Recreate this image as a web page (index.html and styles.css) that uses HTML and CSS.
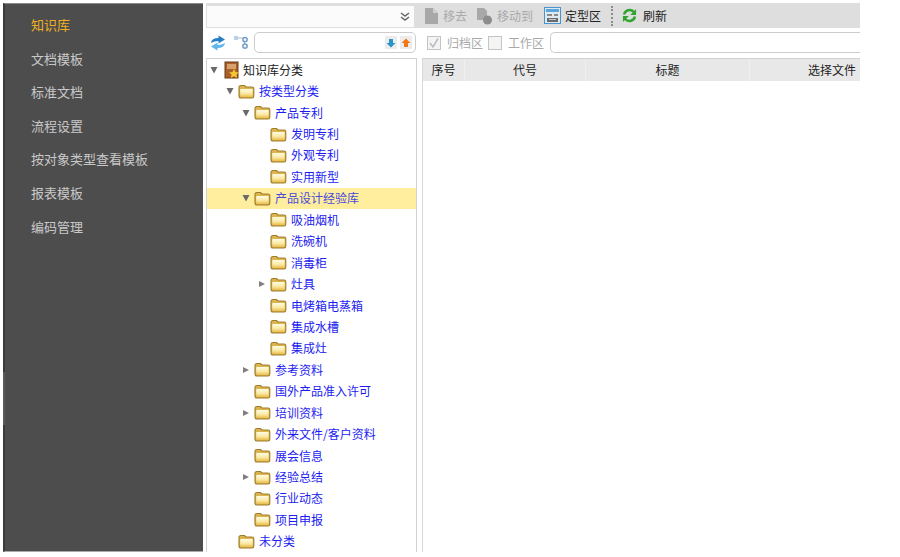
FILE: index.html
```html
<!DOCTYPE html>
<html lang="zh-CN">
<head>
<meta charset="utf-8">
<title>知识库</title>
<link rel="stylesheet" href="styles.css">
</head>
<body>
<svg class="defs" width="0" height="0" aria-hidden="true">
  <defs>
    <linearGradient id="fg" x1="0" y1="0" x2="0" y2="1">
      <stop offset="0" stop-color="#fffbe2"/>
      <stop offset="0.55" stop-color="#fbe9a6"/>
      <stop offset="1" stop-color="#e9bd4c"/>
    </linearGradient>
    <symbol id="folder" viewBox="0 0 17 15">
      <path d="M1 3.5 Q1 1.5 3 1.5 H6.5 L8 3 H14 Q15.8 3 15.8 4.8 V12 Q15.8 14 14 14 H3 Q1 14 1 12 Z" fill="#dcb450" stroke="#a07c28" stroke-width="1.1"/>
      <path d="M2.2 5.8 Q2.2 5 3 5 H14 Q14.7 5 14.7 5.8 V12 Q14.7 13 13.8 13 H3.2 Q2.2 13 2.2 12 Z" fill="url(#fg)"/>
    </symbol>
    <symbol id="down" viewBox="0 0 8 8"><path d="M0.5 1 H7.5 L4 7.5 Z" fill="#6a6a6a"/></symbol>
    <symbol id="right" viewBox="0 0 8 8"><path d="M1 1 L7 4 L1 7 Z" fill="#808080"/></symbol>
  </defs>
</svg>
<div class="app">
  <nav class="side">
    <a class="side-item active">知识库</a>
    <a class="side-item">文档模板</a>
    <a class="side-item">标准文档</a>
    <a class="side-item">流程设置</a>
    <a class="side-item">按对象类型查看模板</a>
    <a class="side-item">报表模板</a>
    <a class="side-item">编码管理</a>
  </nav>
  <div class="main">
    <div class="bar-top">
      <div class="select">
        <svg class="chev" viewBox="0 0 10 10" width="10" height="10"><path d="M1 1 L5 4 L9 1 M1 5 L5 8 L9 5" fill="none" stroke="#666" stroke-width="1.5"/></svg>
      </div>
      <div class="toolbar">
        <svg class="ti ti-1" viewBox="0 0 15 18" width="15" height="18"><path d="M1 1 H9 L14 6 V17 H1 Z" fill="#a8a8a8"/><path d="M9 1 V6 H14" fill="#d0d0d0"/></svg>
        <span class="tt off t-1">移去</span>
        <svg class="ti ti-2" viewBox="0 0 16 18" width="16" height="18"><path d="M1 1 H8 L11 4 V13 H1 Z" fill="#a8a8a8"/><circle cx="11.5" cy="13" r="4.5" fill="#8c8c8c"/></svg>
        <span class="tt off t-2">移动到</span>
        <svg class="ti ti-3" viewBox="0 0 17 17" width="17" height="17"><rect x="0.5" y="0.5" width="16" height="16" fill="#dfe9f0" stroke="#4a94cc"/><rect x="2" y="2" width="13" height="3" fill="#5aa6dc"/><rect x="3" y="7" width="5" height="2" fill="#8a8a8a"/><rect x="10" y="7" width="4" height="2" fill="#8a8a8a"/><rect x="3" y="11" width="11" height="4" fill="#6a6a6a"/><rect x="5" y="12" width="7" height="1" fill="#ccc"/></svg>
        <span class="tt t-3">定型区</span>
        <span class="dots"></span>
        <svg class="ti ti-4" viewBox="0 0 16 16" width="15" height="15"><path d="M2.2 7 A6 6 0 0 1 12.6 4.2" fill="none" stroke="#2fa52f" stroke-width="2.6"/><path d="M15 1 V7.5 H8.8 Z" fill="#2fa52f"/><path d="M13.8 9 A6 6 0 0 1 3.4 11.8" fill="none" stroke="#2fa52f" stroke-width="2.6"/><path d="M1 15 V8.5 H7.2 Z" fill="#2fa52f"/></svg>
        <span class="tt">刷新</span>
      </div>
    </div>
    <div class="bar-second">
      <div class="tree-tools">
        <svg class="sync" viewBox="0 0 16 16" width="16" height="16"><path d="M1 8 Q1.5 3 8.5 3 V0.5 L15 4.5 L8.5 8.5 V6 Q4 6 1 8 Z" fill="#2a7fc4"/><path d="M15 8 Q14.5 13 7.5 13 V15.5 L1 11.5 L7.5 7.5 V10 Q12 10 15 8 Z" fill="#62b6ee"/></svg>
        <svg class="nodes" viewBox="0 0 16 15" width="16" height="15"><path d="M5 3 H11.5 M11.5 3 V10" fill="none" stroke="#a8b8c8"/><rect x="1" y="1" width="4" height="4" fill="#b8d0ea"/><circle cx="12" cy="4.5" r="2.2" fill="#eef4fa" stroke="#6a94c4" stroke-width="1.3"/><circle cx="12" cy="11" r="2.2" fill="#eef4fa" stroke="#6a94c4" stroke-width="1.3"/></svg>
        <div class="search">
          <span class="step"><svg viewBox="0 0 10 10" width="10" height="10"><path d="M3 1 H7 V5 H9.5 L5 9.5 L0.5 5 H3 Z" fill="#2a93c9"/></svg></span>
          <span class="step"><svg viewBox="0 0 10 10" width="10" height="10"><path d="M3 9 H7 V5 H9.5 L5 0.5 L0.5 5 H3 Z" fill="#f07818"/></svg></span>
        </div>
      </div>
      <div class="filters">
        <span class="check"><svg viewBox="0 0 14 14" width="14" height="14"><path d="M3 7 L6 11 L11 2.5" fill="none" stroke="#bbb" stroke-width="1.5"/></svg></span>
        <span class="fl">归档区</span>
        <span class="check"></span>
        <span class="fl">工作区</span>
        <div class="filter-input"></div>
      </div>
    </div>
    <div class="panes">
      <div class="tree">
        <div class="row l0"><svg class="ar"><use href="#down"/></svg><svg class="book" viewBox="0 0 17 18" width="17" height="18"><rect x="2" y="1" width="13" height="16" fill="#a8602c" stroke="#6c3a14"/><rect x="4" y="3" width="9" height="5" fill="#d8a06a"/><path d="M11 8 L12.5 11 L16 11.4 L13.4 13.6 L14.2 17 L11 15.2 L7.8 17 L8.6 13.6 L6 11.4 L9.5 11 Z" fill="#f4c82e"/></svg><span class="rt root">知识库分类</span></div>
        <div class="row l1"><svg class="ar"><use href="#down"/></svg><svg class="fd"><use href="#folder"/></svg><span class="rt">按类型分类</span></div>
        <div class="row l2"><svg class="ar"><use href="#down"/></svg><svg class="fd"><use href="#folder"/></svg><span class="rt">产品专利</span></div>
        <div class="row l3"><span class="ar"></span><svg class="fd"><use href="#folder"/></svg><span class="rt">发明专利</span></div>
        <div class="row l3"><span class="ar"></span><svg class="fd"><use href="#folder"/></svg><span class="rt">外观专利</span></div>
        <div class="row l3"><span class="ar"></span><svg class="fd"><use href="#folder"/></svg><span class="rt">实用新型</span></div>
        <div class="row l2 sel"><svg class="ar"><use href="#down"/></svg><svg class="fd"><use href="#folder"/></svg><span class="rt">产品设计经验库</span></div>
        <div class="row l3"><span class="ar"></span><svg class="fd"><use href="#folder"/></svg><span class="rt">吸油烟机</span></div>
        <div class="row l3"><span class="ar"></span><svg class="fd"><use href="#folder"/></svg><span class="rt">洗碗机</span></div>
        <div class="row l3"><span class="ar"></span><svg class="fd"><use href="#folder"/></svg><span class="rt">消毒柜</span></div>
        <div class="row l3"><svg class="ar"><use href="#right"/></svg><svg class="fd"><use href="#folder"/></svg><span class="rt">灶具</span></div>
        <div class="row l3"><span class="ar"></span><svg class="fd"><use href="#folder"/></svg><span class="rt">电烤箱电蒸箱</span></div>
        <div class="row l3"><span class="ar"></span><svg class="fd"><use href="#folder"/></svg><span class="rt">集成水槽</span></div>
        <div class="row l3"><span class="ar"></span><svg class="fd"><use href="#folder"/></svg><span class="rt">集成灶</span></div>
        <div class="row l2"><svg class="ar"><use href="#right"/></svg><svg class="fd"><use href="#folder"/></svg><span class="rt">参考资料</span></div>
        <div class="row l2"><span class="ar"></span><svg class="fd"><use href="#folder"/></svg><span class="rt">国外产品准入许可</span></div>
        <div class="row l2"><svg class="ar"><use href="#right"/></svg><svg class="fd"><use href="#folder"/></svg><span class="rt">培训资料</span></div>
        <div class="row l2"><span class="ar"></span><svg class="fd"><use href="#folder"/></svg><span class="rt">外来文件/客户资料</span></div>
        <div class="row l2"><span class="ar"></span><svg class="fd"><use href="#folder"/></svg><span class="rt">展会信息</span></div>
        <div class="row l2"><svg class="ar"><use href="#right"/></svg><svg class="fd"><use href="#folder"/></svg><span class="rt">经验总结</span></div>
        <div class="row l2"><span class="ar"></span><svg class="fd"><use href="#folder"/></svg><span class="rt">行业动态</span></div>
        <div class="row l2"><span class="ar"></span><svg class="fd"><use href="#folder"/></svg><span class="rt">项目申报</span></div>
        <div class="row l1"><span class="ar"></span><svg class="fd"><use href="#folder"/></svg><span class="rt">未分类</span></div>
      </div>
      <div class="grid">
        <div class="grid-head">
          <div class="col c1">序号</div>
          <div class="col c2">代号</div>
          <div class="col c3">标题</div>
          <div class="col c4">选择文件</div>
        </div>
      </div>
    </div>
  </div>
</div>
</body>
</html>
```
FILE: styles.css
```css
* { box-sizing: border-box; }
html, body { margin: 0; height: 100%; background: #fff; overflow: hidden; }
body { font-family: "Noto Sans CJK SC", "Liberation Sans", sans-serif; font-size: 12px; color: #222; }
.defs { position: absolute; }
.app { display: flex; width: 900px; height: 552px; padding: 3px 40px 0 3px; }

.side { position: relative; width: 200px; height: 549px; flex: none; background: #4d4d4d; border-left: 2px solid #3b3b3b; border-top: 1px solid #8a8a8a; border-bottom: 1px solid #aaa; padding-top: 4px; }
.side::before { content: ""; position: absolute; left: -2px; top: 368px; width: 2px; height: 53px; background: #5a5a5a; }
.side-item { display: block; height: 33.6px; line-height: 33.6px; padding-left: 26px; font-size: 13px; color: #c9c9c9; }
.side-item.active { color: #eeb022; }

.main { flex: none; width: 654px; margin-left: 3px; display: flex; flex-direction: column; }

.bar-top { display: flex; height: 25px; background: #dedede; flex: none; }
.select { width: 207px; margin: 3px 0 1px 1px; background: #fbfbfb; display: flex; align-items: center; justify-content: flex-end; padding-right: 4px; }
.chev { display: block; }
.toolbar { flex: 1; display: flex; align-items: center; padding-left: 10px; }
.ti { flex: none; display: block; }
.tt { font-size: 12px; line-height: 16px; margin-left: 4px; }
.tt.off { color: #a9a9a9; }
.t-1 { margin-right: 9px; }
.t-2 { margin-left: 5px; margin-right: 11px; }
.t-3 { color: #222; }
.dots { width: 0; height: 20px; border-left: 2px dotted #8c8c8c; margin: 0 9px 0 10px; }
.tt:last-child { margin-left: 6px; }

.bar-second { display: flex; height: 30px; flex: none; padding-top: 4px; background: #fff; }
.tree-tools { width: 210px; height: 21px; flex: none; display: flex; align-items: center; padding-left: 4px; }
.sync { margin-right: 7px; flex: none; }
.nodes { margin-right: 5px; flex: none; }
.search { width: 162px; height: 21px; flex: none; border: 1px solid #ccc; border-radius: 5px; display: flex; align-items: center; justify-content: flex-end; gap: 3px; padding-right: 3px; }
.step { width: 12px; height: 13px; background: #ececec; display: flex; align-items: center; justify-content: center; }
.filters { flex: 1; min-width: 0; height: 21px; display: flex; align-items: center; padding-left: 11px; color: #a9a9a9; }
.check { width: 14px; height: 14px; flex: none; border: 1px solid #c4c4c4; background: #f4f4f4; display: block; position: relative; }
.check svg { display: block; margin: -1px; }
.fl { margin: 0 5px 0 6px; line-height: 16px; }
.filter-input { flex: 1; height: 21px; margin-left: 1px; border: 1px solid #ccc; border-right: 0; border-radius: 5px 0 0 5px; }

.panes { flex: 1; display: flex; min-height: 0; }
.tree { width: 211px; flex: none; border: 1px solid #d2d2d2; border-bottom: 0; overflow: hidden; height: 494px; }
.row { height: 21.45px; display: flex; align-items: center; color: #1c1cf0; white-space: nowrap; }
.row.sel { background: #ffee9e; color: #4a4ad8; margin-left: -1px; padding-left: 36px; }
.l0 { padding-left: 3px; }
.l1 { padding-left: 19px; }
.l2 { padding-left: 35px; }
.l3 { padding-left: 51px; }
.ar { width: 8px; height: 8px; flex: none; display: block; margin-right: 4px; }
.fd { width: 17px; height: 15px; flex: none; display: block; margin-right: 4px; }
.book { flex: none; display: block; margin: 0 3px 0 1px; }
.rt { line-height: 16px; }
.root { color: #222; }

.grid { flex: none; width: 438px; margin-left: 5px; height: 494px; border-left: 1px solid #d8d8d8; border-top: 1px solid #d2d2d2; }
.grid-head { display: flex; height: 22px; background: #e8e8e8; }
.col { height: 22px; line-height: 21px; border-right: 1px solid #f0f0f0; font-size: 12px; color: #222; text-align: center; }
.c1 { width: 42px; }
.c2 { width: 121px; }
.c3 { width: 164px; }
.c4 { flex: 1; border-right: 0; text-align: right; padding-right: 4px; }
```
